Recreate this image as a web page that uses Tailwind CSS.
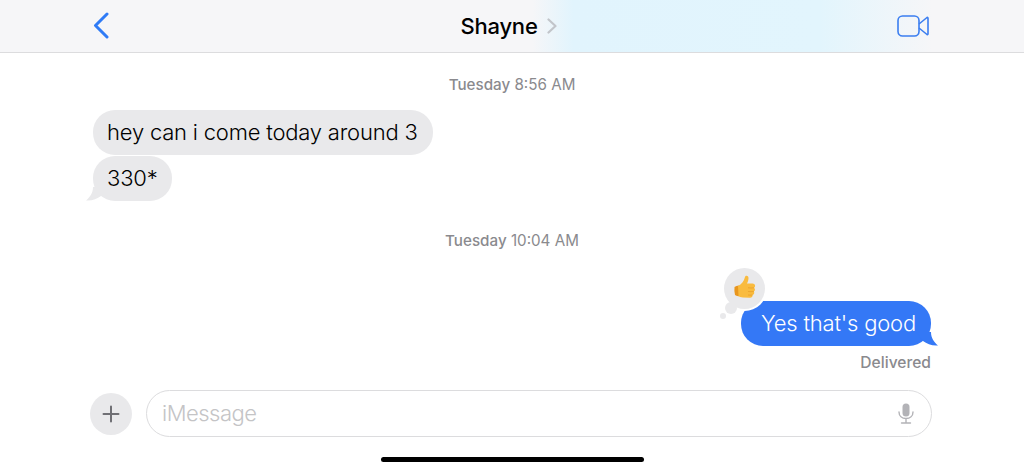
<!DOCTYPE html>
<html lang="en">
<head>
  <meta charset="UTF-8">
  <meta name="viewport" content="width=device-width, initial-scale=1.0">
  <script src="https://cdn.jsdelivr.net/npm/@tailwindcss/browser@4"></script>
  <title>Shayne</title>
</head>
<body>
  <main class="w-[1024px] h-[472px] overflow-hidden bg-white flex flex-col font-['Inter',sans-serif]">

    <!-- nav bar -->
    <header class="h-[53px] shrink-0 border-b border-[#dcdcde] bg-[linear-gradient(90deg,#f6f6f8_0%,#f6f6f8_52%,#e1f4fd_56%,#e2f5fd_80%,#f6f6f8_91%)] flex items-center justify-between pl-[92px] pr-[95px]">
      <svg width="18" height="28" viewBox="0 0 18 28" fill="none" stroke="#2f7bf6" stroke-width="3" stroke-linecap="round" stroke-linejoin="round"><path d="M15 2 L3.500 13.500 L15 25"/></svg>
      <div class="flex items-center gap-[9px] ml-[10px]">
        <span class="text-[22px] font-medium text-black tracking-[-0.2px]">Shayne</span>
        <svg width="10" height="16" viewBox="0 0 10 16" fill="none" stroke="#c2c5ca" stroke-width="2.200" stroke-linecap="round" stroke-linejoin="round"><path d="M1.500 1.500 L8.500 8 L1.500 14.500"/></svg>
      </div>
      <svg width="32" height="22" viewBox="0 0 32 22" fill="none" stroke="#3b7ef0" stroke-width="1.600" stroke-linejoin="round"><rect x="1" y="1" width="21" height="20" rx="4.500"/><path d="M22 9 L30 2.500 Q31 2 31 3.500 V18.500 Q31 20 30 19.500 L22 13"/></svg>
    </header>

    <!-- messages -->
    <section class="flex-1 flex flex-col px-[93px]">
      <p class="mt-[23px] text-center text-[15.2px] leading-[18px] text-[#8a8a8e]"><span class="font-medium">Tuesday</span> 8:56 AM</p>

      <div class="mt-[16px] self-start h-[45px] pl-[14px] pr-[15px] rounded-[22px] bg-[#e9e9eb] flex items-center text-[22px] font-[350] tracking-[-0.2px] text-black">hey can i come today around 3</div>
      <div class="relative mt-[1px] self-start h-[45px] pl-[14px] pr-[15px] rounded-[22px] bg-[#e9e9eb] flex items-center text-[22px] font-[350] tracking-[-0.2px] text-black">
        330*
        <svg class="absolute left-[-7px] bottom-0" width="22" height="14" viewBox="0 0 22 14"><path d="M7 0 C7 6 4 10 0 13.500 C6 14 11 12 15 9 L22 0 Z" fill="#e9e9eb"/></svg>
      </div>

      <p class="mt-[31px] text-center text-[15.2px] leading-[18px] text-[#8a8a8e]"><span class="font-medium">Tuesday</span> 10:04 AM</p>

      <div class="relative mt-[51px] self-end h-[45px] pl-[20px] pr-[15px] rounded-[22px] bg-[#3478f6] flex items-center text-[22px] font-[350] tracking-[-0.2px] text-white">
        Yes that's good
        <svg class="absolute right-[-7px] bottom-0" width="22" height="14" viewBox="0 0 22 14"><path d="M15 0 C15 6 18 10 22 13.500 C16 14 11 12 7 9 L0 0 Z" fill="#3478f6"/></svg>

        <!-- tapback -->
        <div class="absolute left-[-17px] top-[-33px] w-[41px] h-[41px] rounded-full bg-[#e9e9eb] ring-2 ring-white flex items-center justify-center">
          <svg class="mb-[3px]" width="23" height="24" viewBox="0 0 23 24">
            <path d="M1.500 12 Q3 10.500 6 10.500 L7 21 Q3.500 21.500 2 20 Q1 16 1.500 12 Z" fill="#e8961e"/>
            <path d="M5 11 C8.500 9.500 11 6 12 2 C12.500 0 15.500 0.500 15.500 3 C15.500 5 14.800 7 14 8.500 L19.500 8.500 C22.500 8.500 22.800 12 21 12.800 C22.500 13.800 22.300 16 20.800 16.500 C21.800 17.800 21 19.800 19.500 20 C19.800 21.500 18.800 22.800 17 22.800 L10 22.500 C8 22.300 6 21.800 5.500 21 Z" fill="#f9bb3e"/>
            <path d="M15 12.800 Q18 13.200 21 12.800 M15 16.500 Q18 16.800 20.800 16.500 M15 20 Q17 20.300 19.500 20" stroke="#e79b26" stroke-width="0.700" fill="none"/>
          </svg>
        </div>
        <div class="absolute left-[-16px] top-[1px] w-[12px] h-[12px] rounded-full bg-[#e9e9eb]"></div>
        <div class="absolute left-[-21px] top-[12px] w-[6px] h-[6px] rounded-full bg-[#e9e9eb]"></div>
      </div>

      <p class="mt-[8px] self-end text-[15.6px] leading-[18px] font-medium text-[#8a8a8e]">Delivered</p>
    </section>

    <!-- input bar -->
    <footer class="shrink-0 flex items-center gap-[14px] pl-[90px] pr-[92px]">
      <div class="w-[42px] h-[42px] rounded-full bg-[#e9e9eb] flex items-center justify-center">
        <svg width="18" height="18" viewBox="0 0 18 18" stroke="#6f6f74" stroke-width="2" stroke-linecap="round"><path d="M9 1.500 V16.500 M1.500 9 H16.500"/></svg>
      </div>
      <div class="flex-1 h-[47px] rounded-[24px] border border-[#dcdcde] flex items-center justify-between pl-[15px] pr-[17px]">
        <span class="text-[22px] font-[350] tracking-[-0.5px] text-[#c4c4c6]">iMessage</span>
        <svg width="16" height="21" viewBox="0 0 16 21" fill="none"><rect x="4.500" y="0.500" width="7" height="13" rx="3.500" fill="#b3b3b7"/><path d="M1 9 C1 13 4 15.500 8 15.500 C12 15.500 15 13 15 9 M8 15.500 V19.500 M3.500 20 H12.500" stroke="#b3b3b7" stroke-width="1.400" stroke-linecap="round"/></svg>
      </div>
    </footer>

    <div class="shrink-0 mt-[20px] mb-[10px] mx-auto w-[263px] h-[5px] rounded-full bg-black"></div>
  </main>
</body>
</html>
